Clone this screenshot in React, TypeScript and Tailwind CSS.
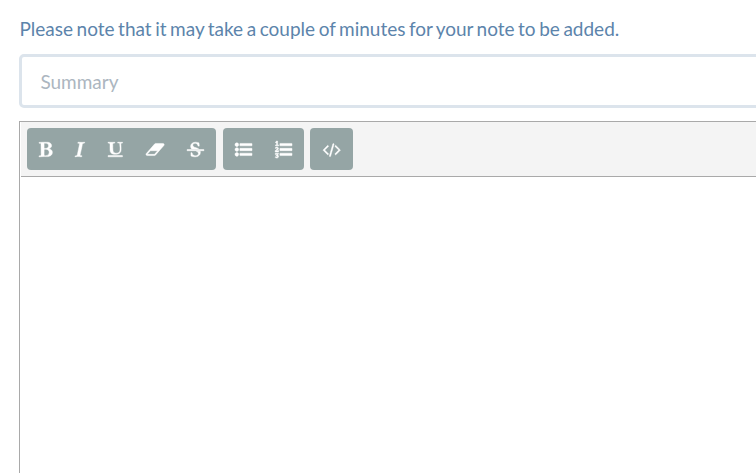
import React from "react";

type Glyph = { box: string; width: string; d: string };

const bold: Glyph = {
  box: "192 0 1408 1792",
  width: "w-[13.36px]",
  d: "M747 1521q74 32 140 32 376 0 376-335 0-114-41-180-27-44-61.5-74t-67.5-46.5-80.5-25-84-10.5-94.5-2q-73 0-101 10 0 53-.5 159t-.5 158q0 8-1 67.5t-.5 96.5 4.5 83.5 12 66.500zm-14-746q42 7 109 7 82 0 143-13t110-44.500 74.500-89.500 25.500-142q0-70-29-122.500t-79-82-108-43.500-124-14q-50 0-130 13 0 50 4 151t4 152q0 27-.5 80t-.5 79q0 46 1 69zm-541 889l2-94q15-4 85-16t106-27q7-12 12.500-27t8.500-33.500 5.500-32.500 3-37.500.5-34v-65.500q0-982-22-1025-4-8-22-14.500t-44.500-11-49.500-7-48.500-4.500-30.500-3l-4-83q98-2 340-11.500t373-9.500q23 0 68.500.5t67.500.5q70 0 136.500 13t128.500 42 108 71 74 104.500 28 137.500q0 52-16.500 95.500t-39 72-64.500 57.500-73 45-84 40q154 35 256.500 134t102.500 248q0 100-35 179.500t-93.500 130.500-138 85.500-163.500 48.500-176 14q-44 0-132-3t-132-3q-106 0-307 11t-231 12z",
};
const italic: Glyph = {
  box: "384 0 1024 1792",
  width: "w-[9.71px]",
  d: "M384 1662l17-85q6-2 81.500-21.500t111.500-37.500q28-35 41-101 1-7 62-289t114-543.500 52-296.500v-25q-24-13-54.500-18.500t-69.500-8-58-5.500l19-103q33 2 120 6.500t149.500 7 120.500 2.500q48 0 98.500-2.500t121-7 98.500-6.500q-5 39-19 89-30 10-101.500 28.500t-108.500 33.500q-8 19-14 42.500t-9 40-7.500 45.500-6.500 42q-27 148-87.500 419.500t-77.500 355.500q-2 9-13 58t-20 90-16 83.500-6 57.500l1 18q17 4 185 31-3 44-16 99-11 0-32.500 1.500t-32.500 1.500q-29 0-87-10t-86-10q-138-2-206-2-51 0-143 9t-121 11z",
};
const underline: Glyph = {
  box: "128 0 1536 1792",
  width: "w-[14.57px]",
  d: "M176 223q-37-2-45-4l-3-88q13-1 40-1 60 0 112 4 132 7 166 7 86 0 168-3 116-4 146-5 56 0 86-2l-1 14 2 64v9q-60 9-124 9-60 0-79 25-13 14-13 132 0 13 .5 32.500t.5 25.500l1 229 14 280q6 124 51 202 35 59 96 92 88 47 177 47 104 0 191-28 56-18 99-51 48-36 65-64 36-56 53-114 21-73 21-229 0-79-3.500-128t-11-122.500-13.500-159.500l-4-59q-5-67-24-88-34-35-77-34l-100 2-14-3 2-86h84l205 10q76 3 196-10l18 2q6 38 6 51 0 7-4 31-45 12-84 13-73 11-79 17-15 15-15 41 0 7 1.500 27t1.500 31q8 19 22 396 6 195-15 304-15 76-41 122-38 65-112 123-75 57-182 89-109 33-255 33-167 0-284-46-119-47-179-122-61-76-83-195-16-80-16-237v-333q0-188-17-213-25-36-147-39zm1488 1409v-64q0-14-9-23t-23-9h-1472q-14 0-23 9t-9 23v64q0 14 9 23t23 9h1472q14 0 23-9t9-23z",
};
const eraser: Glyph = {
  box: "0 0 1920 1792",
  width: "w-[18.2px]",
  d: "M896 1408l336-384h-768l-336 384h768zm1013-1077q15 34 9.500 71.500t-30.500 65.500l-896 1024q-38 44-96 44h-768q-38 0-69.500-20.500t-47.500-54.500q-15-34-9.500-71.500t30.500-65.500l896-1024q38-44 96-44h768q38 0 69.500 20.500t47.500 54.500z",
};
const strike: Glyph = {
  box: "0 0 1792 1792",
  width: "w-[17px]",
  d: "M1760 896q14 0 23 9t9 23v64q0 14-9 23t-23 9h-1728q-14 0-23-9t-9-23v-64q0-14 9-23t23-9h1728zm-1277-64q-28-35-51-80-48-97-48-188 0-181 134-309 133-127 393-127 50 0 167 19 66 12 177 48 10 38 21 118 14 123 14 183 0 18-5 45l-12 3-84-6-14-2q-50-149-103-205-88-91-210-91-114 0-182 59-67 58-67 146 0 73 66 140t279 129q69 20 173 66 58 28 95 52h-743zm507 256h411q7 39 7 92 0 111-41 212-23 55-71 104-37 35-109 81-80 48-153 66-80 21-203 21-114 0-195-23l-140-40q-57-16-72-28-8-8-8-22v-13q0-108-2-156-1-30 0-68l2-37v-44l102-2q15 34 30 71t22.500 56 12.500 27q35 57 80 94 43 36 105 57 59 22 132 22 64 0 139-27 77-26 122-86 47-61 47-129 0-84-81-157-34-29-137-71z",
};
const bullets: Glyph = {
  box: "0 0 1792 1792",
  width: "w-[17px]",
  d: "M384 1408q0 80-56 136t-136 56-136-56-56-136 56-136 136-56 136 56 56 136zm0-512q0 80-56 136t-136 56-136-56-56-136 56-136 136-56 136 56 56 136zm0-512q0 80-56 136t-136 56-136-56-56-136 56-136 136-56 136 56 56 136zM544 1280h1216q32 0 32 32v192q0 32-32 32h-1216q-32 0-32-32v-192q0-32 32-32zM544 768h1216q32 0 32 32v192q0 32-32 32h-1216q-32 0-32-32v-192q0-32 32-32zM544 256h1216q32 0 32 32v192q0 32-32 32h-1216q-32 0-32-32v-192q0-32 32-32z",
};
const numbers: Glyph = {
  box: "0 0 1792 1792",
  width: "w-[17px]",
  d: "M381 1620q0 80-54.500 126t-135.500 46q-106 0-172-66l57-88q49 45 106 45 29 0 50.500-14.500t21.500-42.500q0-64-105-56l-26-56q8-10 32.500-43.500t42.500-54 37-38.500v-1q-16 0-48.500 1t-48.500 1v53h-106v-152h333v88l-95 115q51 12 81 49t30 88zm2-627v159h-362q-6-36-6-54 0-51 23.500-93t56.500-68 66-47.500 56.500-43.500 23.500-45q0-25-14.500-38.500t-39.500-13.500q-46 0-81 58l-85-59q24-51 71.500-79.500t105.500-28.500q73 0 123 41.500t50 112.500q0 50-34 91.500t-75 64.500-75.500 50.500-35.500 52.500h127v-60h105zM384 413v99h-335v-99h107q0-41 .5-121.500t.5-121.500v-12h-2q-8 17-50 54l-71-76 136-127h106v404h108zM544 1280h1216q32 0 32 32v192q0 32-32 32h-1216q-32 0-32-32v-192q0-32 32-32zM544 768h1216q32 0 32 32v192q0 32-32 32h-1216q-32 0-32-32v-192q0-32 32-32zM544 256h1216q32 0 32 32v192q0 32-32 32h-1216q-32 0-32-32v-192q0-32 32-32z",
};
const code: Glyph = {
  box: "0 0 2048 1792",
  width: "w-[19.43px]",
  d: "M681 1399l-50 50q-10 10-23 10t-23-10l-466-466q-10-10-10-23t10-23l466-466q10-10 23-10t23 10l50 50q10 10 10 23t-10 23l-393 393 393 393q10 10 10 23t-10 23zm591-1067l-373 1291q-4 13-15.500 19.500t-23.500 2.500l-62-17q-13-4-19.500-15.500t-2.500-24.500l373-1291q4-13 15.500-19.500t23.500-2.500l62 17q13 4 19.500 15.500t2.500 24.500zm657 651l-466 466q-10 10-23 10t-23-10l-50-50q-10-10-10-23t10-23l393-393-393-393q-10-10-10-23t10-23l50-50q10-10 23-10t23 10l466 466q10 10 10 23t-10 23z",
};

const groups: { width: string; items: [string, Glyph][] }[] = [
  {
    width: "w-[189px]",
    items: [
      ["Bold", bold],
      ["Italic", italic],
      ["Underline", underline],
      ["Clear formatting", eraser],
      ["Strikethrough", strike],
    ],
  },
  { width: "w-[81px]", items: [["Bulleted list", bullets], ["Numbered list", numbers]] },
  { width: "w-[43px]", items: [["Code", code]] },
];

function ToolGroup({ width, items }: { width: string; items: [string, Glyph][] }) {
  return (
    <div className={`flex h-[42px] shrink-0 justify-center rounded bg-[#95a5a5] pl-[0.3px] ${width}`}>
      {items.map(([label, g]) => (
        <button key={label} aria-label={label} className="flex items-center px-[11.6px] text-white">
          <svg
            viewBox={g.box}
            className={`h-[17px] shrink-0 overflow-visible ${g.width}`}
            fill="currentColor"
            stroke="currentColor"
            strokeWidth={50}
          >
            <path d={g.d} />
          </svg>
        </button>
      ))}
    </div>
  );
}

export default function App() {
  return (
    <div className="flex h-[473px] w-[756px] flex-col overflow-hidden bg-white pl-[19px] font-['Lato',sans-serif] text-[19px]">
      <p className="mt-[15px] h-[39px] pl-[0.5px] leading-[28px] tracking-[-0.01px] whitespace-nowrap text-[#5c84ab] [word-spacing:-1.29px]">
        Please note that it may take a couple of minutes for your note to be added.
      </p>
      <input
        placeholder="Summary"
        className="h-[54px] w-[760px] shrink-0 rounded-[5px] border-3 border-[#dce4ec] bg-white px-[18.4px] placeholder:text-[#acb6c0]"
      />
      <div className="mt-[13px] flex w-[760px] flex-1 shrink-0 flex-col border-t border-l border-[#a9a9a9]">
        <div className="ml-px flex h-[55px] shrink-0 gap-[6.5px] border-b border-[#a9a9a9] bg-[#f4f4f4] pt-[6px] pl-[6px]">
          {groups.map((g) => (
            <ToolGroup key={g.width} width={g.width} items={g.items} />
          ))}
        </div>
        <div className="flex-1 bg-white" contentEditable suppressContentEditableWarning />
      </div>
    </div>
  );
}
